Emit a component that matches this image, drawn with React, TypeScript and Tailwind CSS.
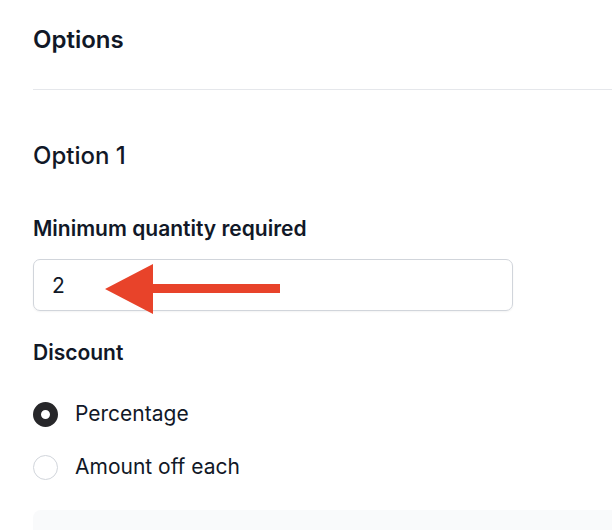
export default function App() {
  return (
    <div className="min-h-[530px] bg-white font-['Inter',sans-serif] text-[#111827]">
      <div className="pl-[33px]">
        <h2 className="pt-[26px] pb-[35px] text-[24px] font-semibold leading-[28px]">Options</h2>
        <div className="h-px bg-[#e5e7eb]" />
      </div>

      <div className="px-[33px] pr-[99px]">
        <h3 className="mt-[51px] text-[24px] leading-[30px] font-medium">Option 1</h3>

        <label className="mt-[45px] block text-[21px] font-semibold leading-[26px]">
          Minimum quantity required
        </label>
        <div className="relative mt-[17px]">
          <input
            type="text"
            defaultValue="2"
            className="h-[52px] w-full rounded-[7px] border border-[#d1d5db] px-[18px] text-[21px] shadow-[0_1px_2px_rgba(0,0,0,0.05)] outline-none"
          />
          <svg
            className="pointer-events-none absolute left-[72px] top-[5px]"
            width="176"
            height="50"
            viewBox="0 0 176 50"
          >
            <polygon points="0,25 48,0 48,20 175,20 175,29 48,29 48,50" fill="#e8432a" />
          </svg>
        </div>

        <p className="mt-[29px] text-[21px] font-semibold leading-[26px]">Discount</p>

        <div className="mt-[35px] flex flex-col gap-[27px]">
          <label className="flex h-[26px] items-center gap-[17px] text-[21px] leading-[26px]">
            <span className="h-[25px] w-[25px] rounded-full border-[8px] border-[#27272a] bg-white" />
            Percentage
          </label>
          <label className="flex h-[26px] items-center gap-[17px] text-[21px] leading-[26px]">
            <span className="h-[25px] w-[25px] rounded-full border border-[#d1d5db] bg-white" />
            Amount off each
          </label>
        </div>
      </div>

      <div className="ml-[33px] mt-[30px] h-[40px] rounded-tl-[8px] bg-[#f9fafb]" />
    </div>
  );
}
